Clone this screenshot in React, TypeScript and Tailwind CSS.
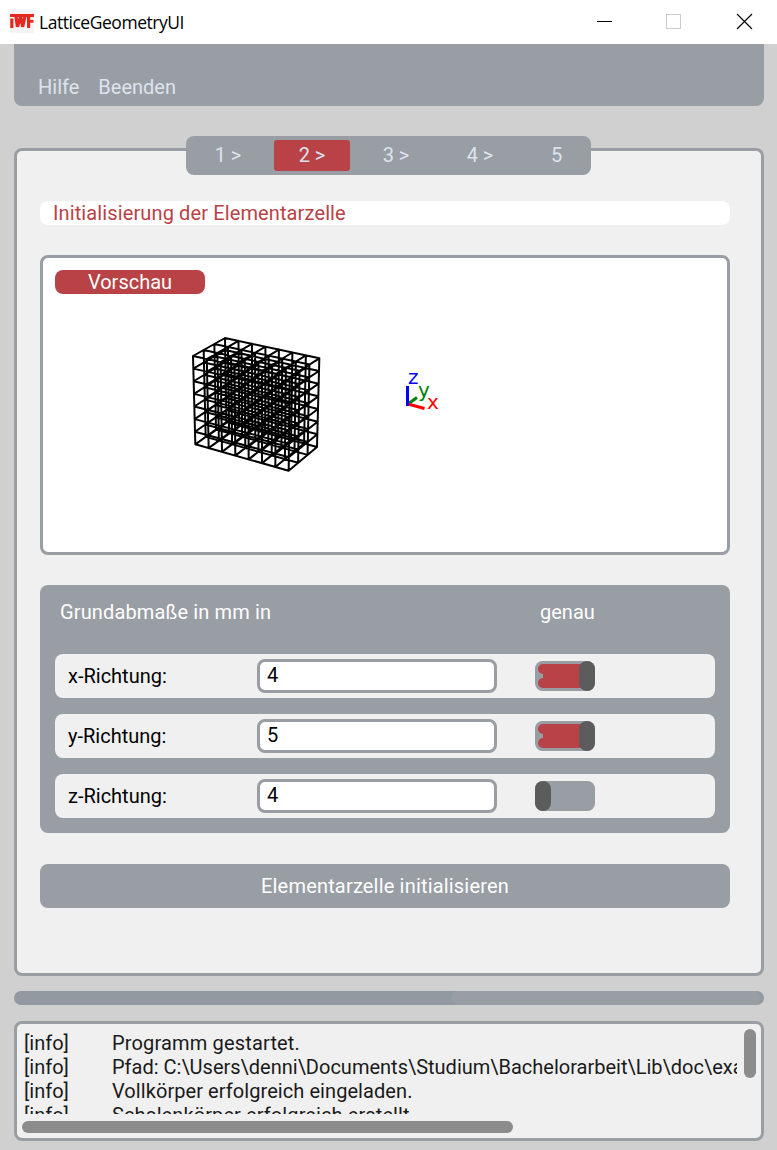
import React from "react";

type Point = [number, number];

// Projected corners of the cuboid, indexed by width / depth / height ends.
const CORNERS: Record<string, Point> = {
  "000": [46, 358],
  "100": [326, 437],
  "010": [139, 291],
  "110": [411, 366],
  "001": [39, 93],
  "101": [329, 156],
  "011": [135, 39],
  "111": [418, 100],
};

const NX = 7;
const NY = 3;
const NZ = 7;

function project(u: number, v: number, w: number): Point {
  let x = 0;
  let y = 0;
  for (const key of Object.keys(CORNERS)) {
    const f =
      (key[0] === "1" ? u : 1 - u) *
      (key[1] === "1" ? v : 1 - v) *
      (key[2] === "1" ? w : 1 - w);
    x += f * CORNERS[key][0];
    y += f * CORNERS[key][1];
  }
  return [x / 3, y / 3];
}

function segment(a: Point, b: Point): string {
  return `M${a[0].toFixed(2)} ${a[1].toFixed(2)}L${b[0].toFixed(2)} ${b[1].toFixed(2)}`;
}

function latticePath(): string {
  const parts: string[] = [];
  for (let i = 0; i <= NX; i++)
    for (let j = 0; j <= NY; j++)
      parts.push(segment(project(i / NX, j / NY, 0), project(i / NX, j / NY, 1)));
  for (let i = 0; i <= NX; i++)
    for (let k = 0; k <= NZ; k++)
      parts.push(segment(project(i / NX, 0, k / NZ), project(i / NX, 1, k / NZ)));
  for (let j = 0; j <= NY; j++)
    for (let k = 0; k <= NZ; k++)
      parts.push(segment(project(0, j / NY, k / NZ), project(1, j / NY, k / NZ)));
  return parts.join("");
}

function TitleBar() {
  return (
    <header className="flex h-11 shrink-0 items-center bg-white pl-2.5">
      <svg width="24" height="24" viewBox="0 0 24 24" className="-mt-0.5 shrink-0">
        <rect width="24" height="24" fill="#f4f4f4" />
        <g fill="none" stroke="#e6281e">
          <path d="M0 6.5H24" strokeWidth="3" />
          <path d="M1.8 9.5V19M18.6 6V19" strokeWidth="3.2" />
          <path d="M18.6 12.3H23.5" strokeWidth="2.8" />
          <path d="M5.8 6L7.4 17.8L10.6 7.5L12.6 17.8L15.3 6" strokeWidth="3.2" strokeLinejoin="bevel" />
        </g>
      </svg>
      <h1 className="ml-[5px] font-['Open_Sans'] text-[17.5px] font-normal tracking-[-0.46px] text-black">
        LatticeGeometryUI
      </h1>
      <svg width="160" height="20" viewBox="0 0 160 20" className="-mt-0.5 mr-[23px] ml-auto" fill="none" shapeRendering="crispEdges">
        <path d="M3 10.5H18" stroke="#000" />
        <rect x="72.5" y="3.5" width="14" height="14" stroke="#cccccc" />
        <path d="M143 3L158 18M158 3L143 18" stroke="#000" shapeRendering="auto" strokeWidth="1.2" />
      </svg>
    </header>
  );
}

const TABS = ["1 >", "2 >", "3 >", "4 >"];

function StepTabs() {
  return (
    <nav className="relative z-10 -mb-[27px] ml-[172px] flex h-[39px] w-[405px] gap-2 rounded-lg bg-[#999da4] p-1 text-[#dce4ee]">
      {TABS.map((label, i) => (
        <button
          key={label}
          className={
            i === 1
              ? "h-[31px] w-[76px] rounded-[3px] bg-[#b94246] pb-px"
              : "h-[31px] w-[76px] rounded-[3px] pb-px"
          }
        >
          {label}
        </button>
      ))}
      <button className="h-[31px] flex-1 pb-px">5</button>
    </nav>
  );
}

function Preview() {
  return (
    <section className="mt-[30px] h-[300px] rounded-lg border-[3px] border-[#999da4] bg-white">
      <div className="relative h-full">
        <button className="absolute top-3 left-3 h-6 w-[150px] rounded-lg bg-[#b94246] leading-6 text-white">
          Vorschau
        </button>
        <svg width="684" height="294" viewBox="43 258 684 294" className="block">
          <path
            d={latticePath()}
            transform="translate(180 325)"
            fill="none"
            stroke="#000"
            strokeWidth="2"
            strokeLinecap="round"
          />
          <g fill="none" strokeWidth="3">
            <path d="M408 404L417 397.5" stroke="#008000" />
            <path d="M408 404L424.5 408.5" stroke="#ff0000" />
            <path d="M407.5 386V406" stroke="#0000ff" />
          </g>
          <g className="font-['DejaVu_Sans'] text-[20px]">
            <text x="408" y="384" fill="#0000ff">z</text>
            <text x="418" y="397" fill="#008000">y</text>
            <text x="427" y="409" fill="#ff0000">x</text>
          </g>
        </svg>
      </div>
    </section>
  );
}

function Switch({ on }: { on: boolean }) {
  return (
    <svg width="60" height="30" viewBox="0 0 60 30" className="ml-[38px] shrink-0">
      <rect width="60" height="30" rx="7.5" fill="#999da4" />
      {on && (
        <path
          d="M8 3H52V27H8A5 5 0 0 1 8 17V13A5 5 0 0 1 8 3Z"
          fill="#b94246"
        />
      )}
      <rect x={on ? 44 : 0} width="16" height="30" rx="8" fill="#5c5c5c" />
    </svg>
  );
}

const DIMENSIONS = [
  { label: "x-Richtung:", value: "4", exact: true },
  { label: "y-Richtung:", value: "5", exact: true },
  { label: "z-Richtung:", value: "4", exact: false },
];

function Dimensions() {
  return (
    <section className="mt-[30px] h-[248px] rounded-lg bg-[#999da4] px-[15px] text-white">
      <div className="flex h-[69px] items-start pt-[15px] pl-[5px] leading-6">
        <span className="w-[480px] tracking-[0.13px]">Grundabmaße in mm in</span>
        <span>genau</span>
      </div>
      <div className="flex flex-col gap-4 text-black">
        {DIMENSIONS.map((d) => (
          <div key={d.label} className="flex h-11 items-center rounded-lg bg-[#f0f0f0] pl-[13px]">
            <span className="w-[189px]">{d.label}</span>
            <div className="flex h-[34px] w-60 items-center rounded-lg border-[3px] border-[#999da4] bg-white pb-[2px] pl-[7px]">
              {d.value}
            </div>
            <Switch on={d.exact} />
          </div>
        ))}
      </div>
    </section>
  );
}

const LOG = [
  { text: "Programm gestartet.", spacing: "tracking-[0.16px]" },
  {
    text: "Pfad: C:\\Users\\denni\\Documents\\Studium\\Bachelorarbeit\\Lib\\doc\\example",
    spacing: "tracking-normal",
  },
  { text: "Vollkörper erfolgreich eingeladen.", spacing: "tracking-[0.07px]" },
  { text: "Schalenkörper erfolgreich erstellt.", spacing: "tracking-[0.1px]" },
];

function LogPanel() {
  return (
    <section className="mt-4 h-[120px] rounded-lg border-[3px] border-[#999da4] bg-[#f0f0f0] pt-[5px] pl-[5px] text-[#1a1a1a]">
      <div className="flex">
        <div className="mt-[2px] h-[83px] w-[715px] overflow-hidden pl-[2px] leading-6">
          {LOG.map((line) => (
            <div key={line.text} className="flex whitespace-nowrap">
              <span className="w-[88px] shrink-0">[info]</span>
              <span className={line.spacing}>{line.text}</span>
            </div>
          ))}
        </div>
        <div className="ml-[7px] h-[49px] w-3 rounded-md bg-[#8c8c8c]" />
      </div>
      <div className="mt-[7px] h-3 w-[491px] rounded-md bg-[#8c8c8c]" />
    </section>
  );
}

export default function App() {
  return (
    <div className="flex h-[1150px] w-[777px] flex-col overflow-hidden bg-[#d0d0d0] font-[Roboto,sans-serif] text-[20px]">
      <TitleBar />
      <div className="flex flex-col pr-[13px] pl-3.5">
        <nav className="mb-[30px] flex h-[62px] gap-[19px] rounded-b-lg bg-[#999da4] pt-[31px] pl-6 leading-6 text-[#dce4ee]">
          <span>Hilfe</span>
          <span>Beenden</span>
        </nav>
        <StepTabs />
        <main className="flex h-[828px] flex-col rounded-lg border-[3px] border-[#999da4] bg-[#f0f0f0] pt-[50px] pr-[31px] pl-[23px]">
          <h2 className="h-6 rounded-lg bg-white pl-[13px] leading-6 tracking-[0.12px] text-[#b94246]">
            Initialisierung der Elementarzelle
          </h2>
          <Preview />
          <Dimensions />
          <button className="mt-[31px] h-11 rounded-lg bg-[#999da4] tracking-[0.18px] text-white">
            Elementarzelle initialisieren
          </button>
        </main>
        <div className="mt-[15px] flex h-3.5 rounded-full bg-[#9299a0] pl-[437px]">
          <div className="h-full w-[310px] rounded-lg bg-[#999da4]" />
        </div>
        <LogPanel />
      </div>
    </div>
  );
}
